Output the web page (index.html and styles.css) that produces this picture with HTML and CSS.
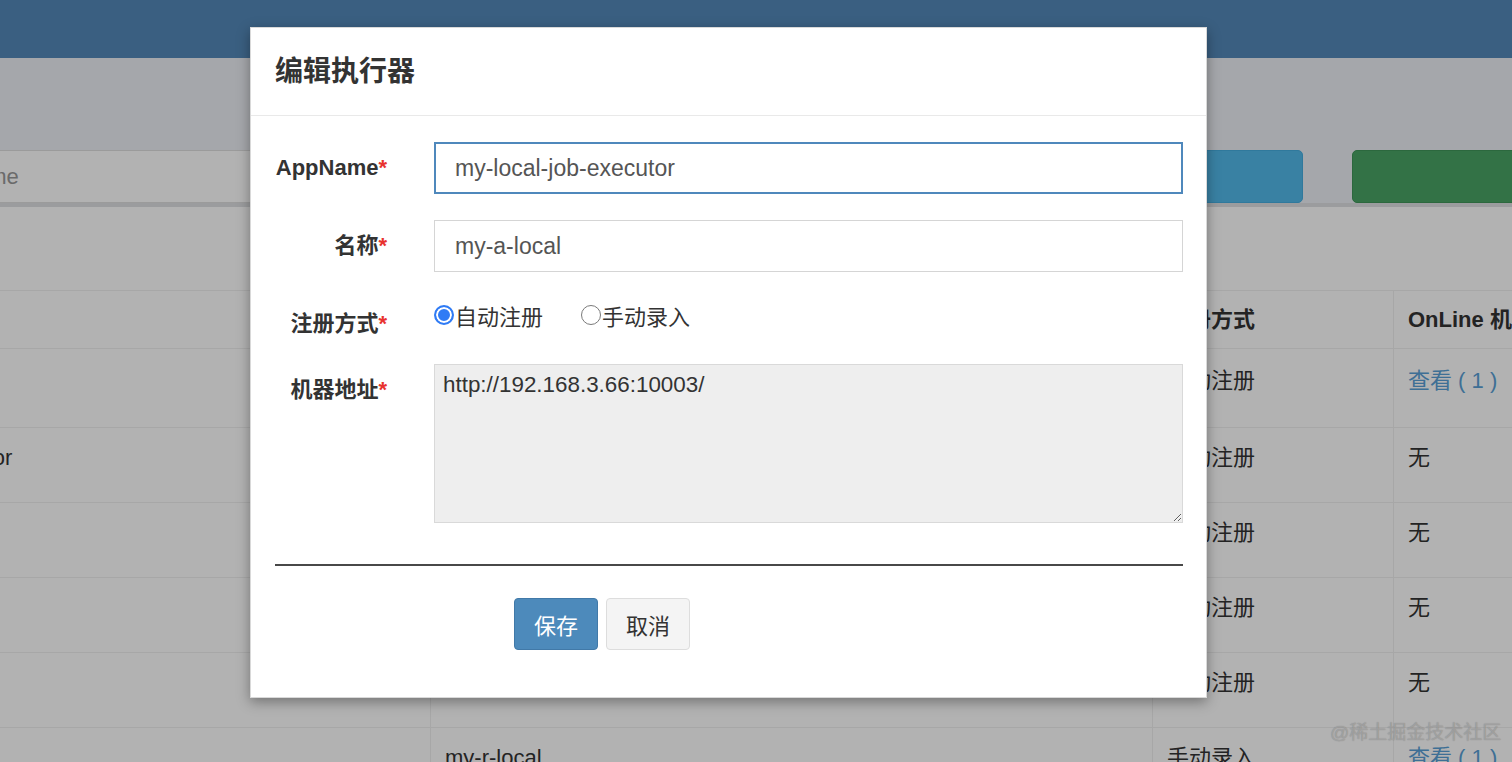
FILE: index.html
```html
<!DOCTYPE html>
<html lang="zh-CN">
<head>
    <meta charset="UTF-8">
    <meta name="viewport" content="width=device-width, initial-scale=1.0">
    <title>执行器管理</title>
    <link rel="stylesheet" href="styles.css">
</head>
<body>
    <header class="main-header"></header>

    <div class="content">
        <div class="content-header"></div>

        <div class="filter-row">
            <input type="text" class="filter-input" placeholder="请输入AppName">
            <button class="btn-search"></button>
            <button class="btn-add"></button>
        </div>

        <div class="box">
            <div class="box-header"></div>
            <table class="group-table">
                <thead>
                    <tr>
                        <th class="col-app"></th>
                        <th class="col-title">名称</th>
                        <th class="col-type">注册方式</th>
                        <th class="col-online">OnLine 机器地址</th>
                    </tr>
                </thead>
                <tbody>
                    <tr class="row-first">
                        <td></td>
                        <td>示例执行器</td>
                        <td>自动注册</td>
                        <td><a href="#">查看 ( 1 )</a></td>
                    </tr>
                    <tr>
                        <td>my-local-job-executor</td>
                        <td>my-a-local</td>
                        <td>自动注册</td>
                        <td>无</td>
                    </tr>
                    <tr>
                        <td></td>
                        <td></td>
                        <td>自动注册</td>
                        <td>无</td>
                    </tr>
                    <tr>
                        <td></td>
                        <td></td>
                        <td>自动注册</td>
                        <td>无</td>
                    </tr>
                    <tr>
                        <td></td>
                        <td></td>
                        <td>自动注册</td>
                        <td>无</td>
                    </tr>
                    <tr>
                        <td></td>
                        <td>my-r-local</td>
                        <td>手动录入</td>
                        <td><a href="#">查看 ( 1 )</a></td>
                    </tr>
                </tbody>
            </table>
        </div>
    </div>

    <div class="watermark">@稀土掘金技术社区</div>

    <div class="modal-backdrop"></div>

    <div class="modal">
        <div class="modal-header">
            <h4 class="modal-title">编辑执行器</h4>
        </div>
        <div class="modal-body">
            <form class="form-horizontal">
                <div class="form-group">
                    <label class="control-label">AppName<span class="required">*</span></label>
                    <input type="text" class="form-control is-focus" value="my-local-job-executor">
                </div>
                <div class="form-group">
                    <label class="control-label">名称<span class="required">*</span></label>
                    <input type="text" class="form-control" value="my-a-local">
                </div>
                <div class="form-group">
                    <label class="control-label">注册方式<span class="required">*</span></label>
                    <div class="radio-group">
                        <label class="radio-item"><input type="radio" name="addressType" checked>自动注册</label>
                        <label class="radio-item"><input type="radio" name="addressType">手动录入</label>
                    </div>
                </div>
                <div class="form-group">
                    <label class="control-label">机器地址<span class="required">*</span></label>
                    <textarea class="form-textarea" readonly>http://192.168.3.66:10003/</textarea>
                </div>

                <hr class="divider">

                <div class="form-actions">
                    <button type="button" class="btn btn-primary">保存</button>
                    <button type="button" class="btn btn-default">取消</button>
                </div>
            </form>
        </div>
    </div>
</body>
</html>
```

FILE: styles.css
```css
* {
    box-sizing: border-box;
}

body {
    font-family: "Liberation Sans", "Noto Sans CJK SC", sans-serif;
    background-color: #ecf0f5;
    color: #333;
    margin: 0;
    padding: 0;
    width: 1512px;
    height: 762px;
    overflow: hidden;
    position: relative;
}

.main-header {
    height: 58px;
    background-color: #5489b9;
}

.content-header {
    height: 92px;
}

/* search row */
.filter-row {
    display: flex;
    height: 53px;
    margin-left: -164px;
}

.filter-input {
    flex-shrink: 0;
    width: 1050px;
    height: 53px;
    border: 1px solid #dedede;
    background-color: #fff;
    padding: 0 18px;
    font-family: inherit;
    font-size: 22px;
    color: #555;
}

.filter-input::placeholder {
    color: #999;
}

.btn-search {
    flex-shrink: 0;
    width: 300px;
    margin-left: 117px;
    border: 1px solid #46aee0;
    border-radius: 5px;
    background-color: #52b9ea;
}

.btn-add {
    flex-shrink: 0;
    width: 420px;
    margin-left: 49px;
    border: 1px solid #3f955a;
    border-radius: 5px;
    background-color: #4aa465;
}

/* table box */
.box {
    background-color: #fff;
    border-top: 4px solid #dfe0e2;
    height: 600px;
}

.box-header {
    height: 83px;
}

.group-table {
    border-collapse: collapse;
    margin-left: -213px;
    font-size: 22px;
    table-layout: fixed;
    width: 2006px;
}

.group-table th,
.group-table td {
    border: 1px solid #f0f0f0;
    text-align: left;
    padding: 0 14px 14px;
    line-height: 30px;
    white-space: nowrap;
    overflow: hidden;
}

.group-table th {
    height: 58px;
    padding-bottom: 0;
    font-weight: bold;
}

.group-table td {
    height: 75px;
}

.group-table .row-first td {
    height: 79px;
}

.col-app { width: 643px; }
.col-title { width: 722px; }
.col-type { width: 241px; }
.col-online { width: 400px; }

.group-table a {
    color: #5a9fd6;
    text-decoration: none;
}

.watermark {
    position: absolute;
    left: 1330px;
    top: 717px;
    font-size: 19px;
    color: rgba(255, 255, 255, 0.62);
    text-shadow: 0 0 1px rgba(0, 0, 0, 0.3);
    z-index: 5;
}

/* modal */
.modal-backdrop {
    position: absolute;
    top: 0;
    left: 0;
    right: 0;
    bottom: 0;
    background-color: rgba(0, 0, 0, 0.3);
    z-index: 10;
}

.modal {
    position: absolute;
    left: 250px;
    top: 27px;
    width: 957px;
    background-color: #fff;
    border: 1px solid rgba(0, 0, 0, 0.15);
    box-shadow: 0 4px 12px rgba(0, 0, 0, 0.35);
    z-index: 20;
}

.modal-header {
    padding: 28px 24px 28px;
    border-bottom: 1px solid #e9e9e9;
}

.modal-title {
    margin: 0;
    font-size: 28px;
    line-height: 31px;
    font-weight: bold;
    color: #333;
}

.modal-body {
    padding: 26px 23px 47px 24px;
}

.form-group {
    display: grid;
    grid-template-columns: 112px 1fr;
    column-gap: 47px;
    margin-bottom: 26px;
}

.control-label {
    text-align: right;
    font-size: 22px;
    font-weight: bold;
    line-height: 29px;
    padding-top: 11px;
    white-space: nowrap;
}

.required {
    color: #e8322e;
}

.form-control {
    height: 52px;
    width: 100%;
    border: 1px solid #d5d5d5;
    padding: 0 20px;
    font-family: inherit;
    font-size: 23px;
    color: #555;
    background-color: #fff;
}

.form-control.is-focus {
    border: 2px solid #4f88bc;
    padding: 0 19px;
}

.radio-group {
    display: flex;
    align-items: center;
    height: 34px;
    font-size: 22px;
    color: #333;
}

.radio-item {
    display: flex;
    align-items: center;
    margin-right: 38px;
}

.radio-item input {
    appearance: none;
    -webkit-appearance: none;
    width: 20px;
    height: 20px;
    margin: 0 1px 0 0;
    border-radius: 50%;
    border: 1.5px solid #7a7a7a;
    background-color: #fff;
}

.radio-item input:checked {
    border: 2px solid #2f7bf5;
    background-color: #2f7bf5;
    box-shadow: inset 0 0 0 2px #fff;
}

.form-textarea {
    height: 159px;
    width: 100%;
    border: 1px solid #d9d9d9;
    background-color: #eee;
    padding: 7px 8px;
    font-family: inherit;
    font-size: 22.4px;
    line-height: 26px;
    color: #333;
    resize: both;
}

.divider {
    margin: 41px 0 0;
    border: 0;
    border-top: 2px solid #484848;
}

.form-actions {
    display: flex;
    gap: 8px;
    margin-left: 239px;
    margin-top: 32px;
}

.btn {
    height: 52px;
    padding: 0 19px;
    font-family: inherit;
    font-size: 22px;
    border-radius: 4px;
    cursor: pointer;
}

.btn-primary {
    background-color: #4d8abb;
    border: 1px solid #4179a8;
    color: #fff;
}

.btn-default {
    background-color: #f4f4f4;
    border: 1px solid #ddd;
    color: #333;
}
```
